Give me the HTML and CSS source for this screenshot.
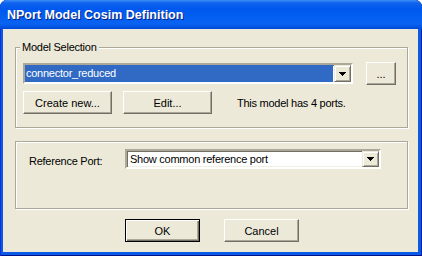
FILE: index.html
```html
<!DOCTYPE html>
<html lang="en">
<head>
  <meta charset="UTF-8" />
  <title>NPort Model Cosim Definition</title>
  <link rel="stylesheet" href="styles.css">
</head>
<body>

<div class="window">
  <div class="titlebar">
    <span class="title">NPort Model Cosim Definition</span>
  </div>

  <div class="client">
    <fieldset class="group group-model">
      <legend>Model Selection</legend>
      <div class="row">
        <div class="combo combo-model">
          <span class="combo-value selected">connector_reduced</span>
          <span class="combo-btn">
            <svg width="7" height="4" viewBox="0 0 7 4"><polygon points="0,0 7,0 3.5,4" fill="#000"/></svg>
          </span>
        </div>
        <button class="btn btn-browse">...</button>
      </div>
      <div class="row row-actions">
        <button class="btn btn-wide">Create new...</button>
        <button class="btn btn-wide">Edit...</button>
        <span class="note">This model has 4 ports.</span>
      </div>
    </fieldset>

    <fieldset class="group group-ref">
      <div class="row">
        <label class="field-label">Reference Port:</label>
        <div class="combo combo-ref">
          <span class="combo-value">Show common reference port</span>
          <span class="combo-btn">
            <svg width="7" height="4" viewBox="0 0 7 4"><polygon points="0,0 7,0 3.5,4" fill="#000"/></svg>
          </span>
        </div>
      </div>
    </fieldset>

    <div class="dialog-buttons">
      <button class="btn btn-default">OK</button>
      <button class="btn">Cancel</button>
    </div>
  </div>
</div>

</body>
</html>
```

FILE: styles.css
```css
body {
  margin: 0;
  background: #fff;
  font-family: 'Liberation Sans', Arial, sans-serif;
  font-size: 11px;
  color: #000;
}

.window {
  width: 422px;
  height: 256px;
  display: flex;
  flex-direction: column;
  border-radius: 7px 7px 0 0;
  background: #0a5ae6;
  box-shadow: inset 1px 0 #0831d9, inset -1px 0 #001ea0, inset 0 -1px #00138c;
  overflow: hidden;
}

.titlebar {
  height: 29px;
  display: flex;
  align-items: center;
  padding: 0 7px;
  background: linear-gradient(to bottom, #3d8ef8 0, #0f63ec 3px, #0058ee 9px, #0360f2 18px, #0a62f0 24px, #0048d8 29px);
  border-radius: 7px 7px 0 0;
}

.title {
  color: #fff;
  font-size: 12.5px;
  font-weight: bold;
  text-shadow: 1px 1px #0a1e80;
  margin-top: 1px;
}

.client {
  height: 223px;
  margin: 0 4px 4px 3px;
  padding: 12px 10px 0 12px;
  box-sizing: border-box;
  background: #ece9d8;
  letter-spacing: -0.25px;
}

.group {
  margin: 0;
  min-width: 0;
  border: 1px solid #aca899;
  box-shadow: inset 1px 1px #fff, 1px 1px #fff;
}

.group legend {
  padding: 0 2px;
  margin-left: -3px;
  line-height: 13px;
  background: #ece9d8;
}

.group-model {
  padding: 8px 0 13px 7px;
  margin-bottom: 13px;
}

.group-ref {
  height: 68px;
  box-sizing: border-box;
  padding: 7px 0 0 13px;
}

.row {
  display: flex;
  align-items: center;
  height: 23px;
}

.row-actions {
  margin-top: 6px;
}

.group-ref .row {
  height: 20px;
}

.combo {
  display: flex;
  box-sizing: border-box;
  height: 21px;
  background: #fff;
  border: 2px solid;
  border-color: #aca899 #fff #fff #aca899;
  box-shadow: inset 1px 1px #716f64, inset -1px -1px #f1efe2;
}

.combo-model {
  width: 330px;
}

.combo-ref {
  width: 256px;
  height: 20px;
}

.combo-value {
  flex: 1;
  line-height: 16px;
  padding-left: 3px;
  white-space: nowrap;
}

.combo-value.selected {
  background: #316ac5;
  color: #fff;
  margin: 0 1px 0 0;
  padding-left: 1px;
}

.combo-btn {
  width: 17px;
  display: flex;
  align-items: center;
  justify-content: center;
  box-sizing: border-box;
  background: #ece9d8;
  border: 1px solid;
  border-color: #ece9d8 #716f64 #716f64 #ece9d8;
  box-shadow: inset 1px 1px #fff, inset -1px -1px #aca899;
  shape-rendering: crispEdges;
}

.btn {
  box-sizing: border-box;
  height: 23px;
  padding: 0;
  font-family: inherit;
  font-size: 11px;
  letter-spacing: 0;
  color: #000;
  background: #ece9d8;
  border: 1px solid;
  border-color: #fff #716f64 #716f64 #fff;
  box-shadow: inset -1px -1px #aca899;
}

.btn-browse {
  width: 30px;
  margin-left: 13px;
}

.btn-wide {
  width: 89px;
  margin-right: 11px;
}

.note {
  margin-left: 14px;
}

.field-label {
  width: 96px;
  margin-top: 3px;
}

.dialog-buttons {
  display: flex;
  justify-content: center;
  gap: 24px;
  margin-top: 10px;
  padding-left: 1px;
}

.dialog-buttons .btn {
  width: 75px;
}

.btn-default {
  border-color: #000;
  box-shadow: inset 1px 1px #fff, inset -1px -1px #716f64, inset -2px -2px #aca899;
}
```
